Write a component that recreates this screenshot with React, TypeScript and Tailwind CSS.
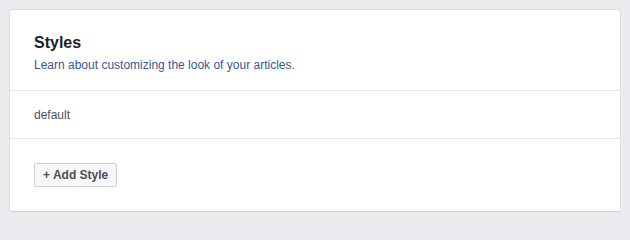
export default function App() {
  return (
    <div className="min-h-screen bg-[#e9ebee] p-[9px] font-['Liberation_Sans',Arial,sans-serif]">
      <div className="w-[612px] rounded-[3px] border border-[#dddfe2] border-b-[#d0d1d5] bg-white">
        <div className="border-b border-[#e5e5e5] px-6 pt-[23px] pb-[17px]">
          <h2 className="text-[16px] leading-[20px] font-bold text-[#1d2129]">Styles</h2>
          <a href="#" className="mt-1 block text-[12px] leading-[16px] text-[#365899]">
            Learn about customizing the look of your articles.
          </a>
        </div>
        <div className="flex h-[48px] items-center border-b border-[#e5e5e5] px-6">
          <span className="text-[12px] leading-[16px] text-[#4b4f56]">default</span>
        </div>
        <div className="px-6 py-6">
          <button className="flex h-[24px] items-center rounded-[2px] border border-[#ced0d4] bg-[#f6f7f9] px-2 text-[12px] font-bold text-[#4b4f56]">
            + Add Style
          </button>
        </div>
      </div>
    </div>
  );
}
